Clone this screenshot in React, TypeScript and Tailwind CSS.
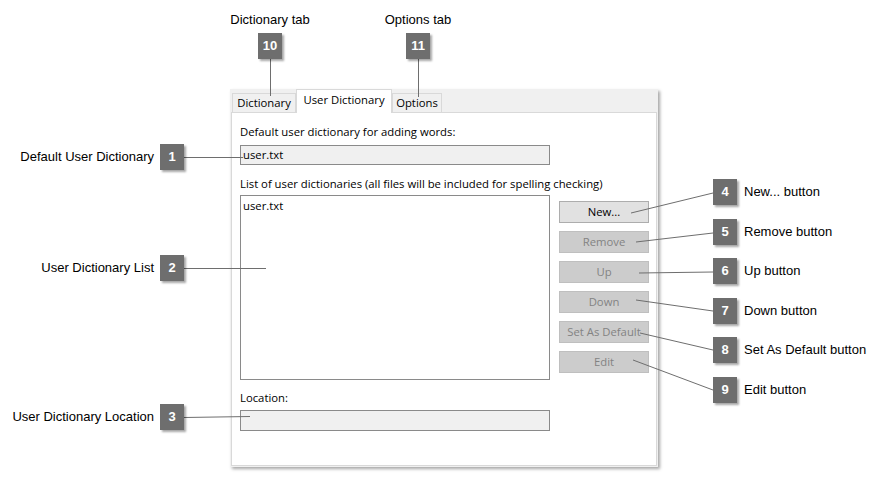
import React from "react";

const uiFont = { fontFamily: '"Open Sans", "Noto Sans", sans-serif' };
const noteFont = { fontFamily: '"Liberation Sans", Arial, sans-serif' };

function Badge({ n }: { n: number }) {
  return (
    <div
      className="w-[24px] h-[26px] bg-[#6e6e6e] text-white font-bold text-[13px] flex items-center justify-center shadow-[2px_2px_2px_rgba(0,0,0,0.35)]"
      style={noteFont}
    >
      {n}
    </div>
  );
}

interface Btn {
  label: string;
  enabled: boolean;
}

const buttons: Btn[] = [
  { label: "New...", enabled: true },
  { label: "Remove", enabled: false },
  { label: "Up", enabled: false },
  { label: "Down", enabled: false },
  { label: "Set As Default", enabled: false },
  { label: "Edit", enabled: false },
];

const leftNotes = [
  { n: 1, text: "Default User Dictionary", top: "top-[144px]" },
  { n: 2, text: "User Dictionary List", top: "top-[255px]" },
  { n: 3, text: "User Dictionary Location", top: "top-[404px]" },
];

const rightNotes = [
  { n: 4, text: "New... button", top: "top-[179px]" },
  { n: 5, text: "Remove button", top: "top-[219px]" },
  { n: 6, text: "Up button", top: "top-[258px]" },
  { n: 7, text: "Down button", top: "top-[298px]" },
  { n: 8, text: "Set As Default button", top: "top-[337px]" },
  { n: 9, text: "Edit button", top: "top-[377px]" },
];

// leader lines: [x1, y1, x2, y2]
const lines: [number, number, number, number][] = [
  [270.5, 59, 270.5, 96],
  [418.5, 59, 418.5, 97],
  [184, 157.5, 243, 157.5],
  [184, 268.5, 266, 268.5],
  [184, 417.5, 250, 416.5],
  [713, 193, 631, 213],
  [713, 233, 636, 242],
  [713, 272, 639, 273],
  [713, 311, 636, 300],
  [713, 350, 640, 333],
  [713, 390, 633, 360],
];

export default function App() {
  return (
    <div className="relative w-[883px] h-[478px] bg-white overflow-hidden">
      {/* Dialog */}
      <div
        className="ml-[230px] mt-[89px] w-[428px] h-[378px] bg-[#f0f0f0] flex flex-col shadow-[2px_2px_3px_rgba(0,0,0,0.35)] text-[11.3px] text-black"
        style={uiFont}
      >
        {/* Tabs */}
        <div className="flex items-end h-[23px] pl-[2px] relative z-10">
          <div className="h-[19px] w-[64px] border border-b-0 border-[#d9d9d9] bg-[#f0f0f0] flex items-center justify-center">
            Dictionary
          </div>
          <div className="h-[24px] mb-[-1px] w-[96px] border border-b-0 border-[#d9d9d9] bg-white flex items-start pt-[2px] justify-center">
            User Dictionary
          </div>
          <div className="h-[19px] w-[50px] border border-b-0 border-[#d9d9d9] bg-[#f0f0f0] flex items-center justify-center">
            Options
          </div>
        </div>

        {/* Panel */}
        <div className="flex-1 mx-[1px] mb-[1px] bg-white border border-[#d9d9d9] pl-[8px] pt-[11px] flex flex-col">
          <div className="h-[16px] leading-[16px]">
            Default user dictionary for adding words:
          </div>
          <div className="mt-[5px] w-[310px] h-[20px] bg-[#f0f0f0] border border-[#8a8a8a] pl-[2px] leading-[18px]">
            user.txt
          </div>
          <div className="mt-[11px] h-[16px] leading-[16px]">
            List of user dictionaries (all files will be included for spelling
            checking)
          </div>
          <div className="mt-[3px] flex">
            <div className="w-[310px] h-[185px] border border-[#8a8a8a] pl-[2px] pt-[2px] leading-[16px]">
              user.txt
            </div>
            <div className="ml-[9px] pt-[6px] flex flex-col gap-[8px]">
              {buttons.map((b, i) => (
                <div
                  key={i}
                  className={`w-[90px] h-[22px] flex items-center justify-center border ${
                    b.enabled
                      ? "bg-[#e1e1e1] border-[#adadad] text-black"
                      : "bg-[#cccccc] border-[#bfbfbf] text-[#838383]"
                  }`}
                >
                  {b.label}
                </div>
              ))}
            </div>
          </div>
          <div className="mt-[10px] h-[16px] leading-[16px]">Location:</div>
          <div className="mt-[4px] w-[310px] h-[21px] bg-[#f0f0f0] border border-[#8a8a8a]" />
        </div>
      </div>

      {/* Leader lines */}
      <svg
        className="absolute inset-0 z-20 pointer-events-none"
        width="883"
        height="478"
      >
        {lines.map(([x1, y1, x2, y2], i) => (
          <line
            key={i}
            x1={x1}
            y1={y1}
            x2={x2}
            y2={y2}
            stroke="#6e6e6e"
            strokeWidth="1"
          />
        ))}
      </svg>

      {/* Top callouts */}
      <div
        className="absolute left-[210px] top-[12px] w-[120px] flex flex-col items-center gap-[6px] z-30"
        style={noteFont}
      >
        <div className="text-[13px] leading-[15px]">Dictionary tab</div>
        <Badge n={10} />
      </div>
      <div
        className="absolute left-[358px] top-[12px] w-[120px] flex flex-col items-center gap-[6px] z-30"
        style={noteFont}
      >
        <div className="text-[13px] leading-[15px]">Options tab</div>
        <Badge n={11} />
      </div>

      {/* Left callouts */}
      {leftNotes.map((c) => (
        <div
          key={c.n}
          className={`absolute right-[699px] ${c.top} flex items-center gap-[6px] z-30`}
          style={noteFont}
        >
          <div className="text-[13px] whitespace-nowrap">{c.text}</div>
          <Badge n={c.n} />
        </div>
      ))}

      {/* Right callouts */}
      {rightNotes.map((c) => (
        <div
          key={c.n}
          className={`absolute left-[713px] ${c.top} flex items-center gap-[7px] z-30`}
          style={noteFont}
        >
          <Badge n={c.n} />
          <div className="text-[13px] whitespace-nowrap">{c.text}</div>
        </div>
      ))}
    </div>
  );
}
